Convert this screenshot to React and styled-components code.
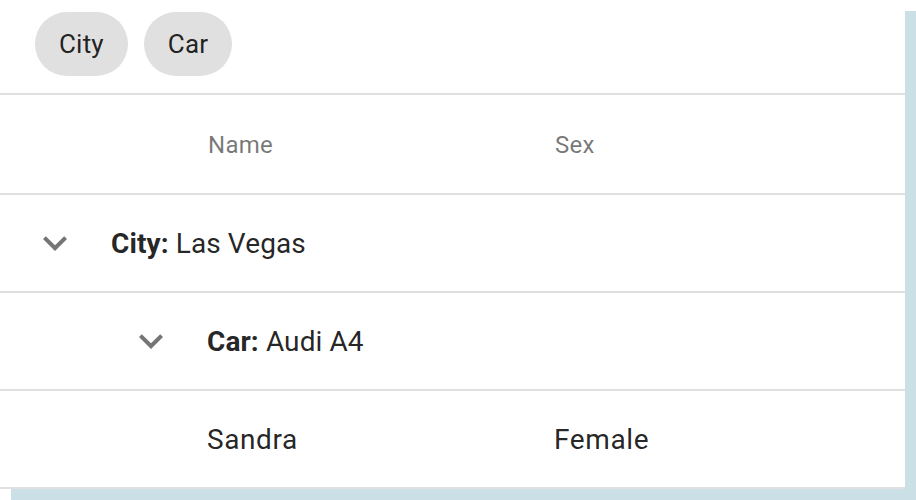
import React from 'react'
import styled, { createGlobalStyle } from 'styled-components'

const GlobalStyle = createGlobalStyle`
  html, body {
    margin: 0;
    padding: 0;
    background: #fff;
    font-family: Roboto, "Liberation Sans", sans-serif;
    color: rgba(0, 0, 0, 0.87);
  }
`

const groups = ['City', 'Car']
const columns = [
  { name: 'name', title: 'Name' },
  { name: 'sex', title: 'Sex' },
]

export default function App() {
  return (
    <Stage>
      <GlobalStyle />
      <Paper>
        <Toolbar>
          {groups.map((g) => (
            <Chip key={g}>{g}</Chip>
          ))}
        </Toolbar>

        <HeadRow>
          {columns.map((c) => (
            <HeadCell key={c.name}>{c.title}</HeadCell>
          ))}
        </HeadRow>

        <GroupRow $level={0}>
          <ExpandIcon />
          <GroupLabel>
            <strong>City:</strong> Las Vegas
          </GroupLabel>
        </GroupRow>

        <GroupRow $level={1}>
          <ExpandIcon />
          <GroupLabel>
            <strong>Car:</strong> Audi A4
          </GroupLabel>
        </GroupRow>

        <DataRow>
          <Cell>Sandra</Cell>
          <Cell>Female</Cell>
        </DataRow>
      </Paper>
    </Stage>
  )
}

function ExpandIcon() {
  return (
    <IconBox>
      <svg width="48" height="48" viewBox="0 0 24 24">
        <path d="M16.59 8.59L12 13.17 7.41 8.59 6 10l6 6 6-6z" fill="rgba(0,0,0,0.54)" />
      </svg>
    </IconBox>
  )
}

const Stage = styled.div`
  width: 916px;
  height: 500px;
  background: #fff;
`

const Paper = styled.div`
  width: 905px;
  background: #fff;
  box-shadow: 11px 11px 0 0 #cbe0e6;
`

const Toolbar = styled.div`
  box-sizing: border-box;
  height: 95px;
  display: flex;
  align-items: flex-start;
  gap: 16px;
  padding: 12px 0 0 35px;
  border-bottom: 2px solid #e0e0e0;
`

const Chip = styled.div`
  height: 64px;
  display: flex;
  align-items: center;
  padding: 0 24px;
  border-radius: 32px;
  background: #e0e0e0;
  font-size: 26px;
  letter-spacing: 0.2px;
  color: rgba(0, 0, 0, 0.87);
`

const HeadRow = styled.div`
  box-sizing: border-box;
  height: 100px;
  display: grid;
  grid-template-columns: 347px 1fr;
  align-items: center;
  padding: 2px 0 0 208px;
  border-bottom: 2px solid #e0e0e0;
`

const HeadCell = styled.div`
  font-size: 24px;
  letter-spacing: 0.3px;
  color: rgba(0, 0, 0, 0.54);
`

const GroupRow = styled.div`
  box-sizing: border-box;
  height: 98px;
  display: flex;
  align-items: center;
  gap: 32px;
  padding-left: ${(p) => 31 + p.$level * 96}px;
  border-bottom: 2px solid #e0e0e0;
`

const IconBox = styled.span`
  display: flex;
  width: 48px;
  height: 48px;
`

const GroupLabel = styled.div`
  font-size: 28px;
  letter-spacing: 0.1px;
  strong {
    font-weight: 700;
  }
`

const DataRow = styled.div`
  box-sizing: border-box;
  height: 98px;
  display: grid;
  grid-template-columns: 347px 1fr;
  align-items: center;
  padding-left: 207px;
  border-bottom: 2px solid #e0e0e0;
`

const Cell = styled.div`
  font-size: 28px;
  letter-spacing: 0.6px;
`
